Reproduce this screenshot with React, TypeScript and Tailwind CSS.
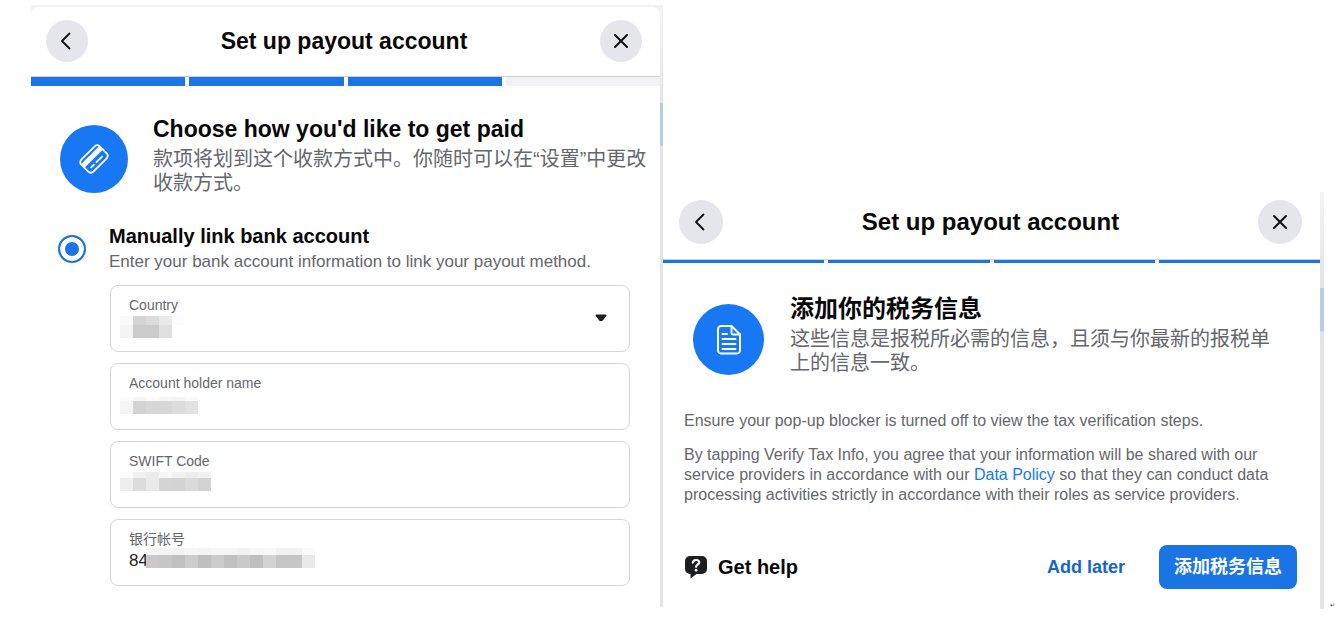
import React from "react";

const Mosaic = ({ rows, className }: any) => {
  return (
    <div className={`pointer-events-none absolute ${className}`} aria-hidden="true">
      {rows.map((row: any, i: number) => (
        <div key={i} className="flex" style={{ height: row.height }}>
          {row.cells.map((color: string, j: number) => (
            <span key={j} className="w-[13px]" style={{ backgroundColor: color }} />
          ))}
        </div>
      ))}
    </div>
  );
};

const countryMask = [
  { height: 9, cells: ["#f9f9f9", "#d4d4d4", "#dbdbdb", "#e9e9e9", "#fcfcfc"] },
  { height: 13, cells: ["#f3f3f3", "#cbcbcb", "#cbcbcb", "#e0e0e0"] },
];

const nameMask = [
  { height: 4, cells: ["#fcfcfc", "#f5f5f5", "#fbfbfb", "#f6f6f6", "#f4f4f4", "#fafafa"] },
  { height: 13, cells: ["#f5f5f5", "#d3d3d3", "#d7d7d7", "#d7d7d7", "#dcdcdc", "#e2e2e2"] },
];

const swiftMask = [
  { height: 6, cells: ["#fbfbfb", "#f0f0f0", "#ebebeb", "#f6f6f6", "#f1f1f1", "#ededed", "#f1f1f1"] },
  { height: 13, cells: ["#eeeeee", "#dcdcdc", "#eaeaea", "#d4d4d4", "#d3d3d3", "#dadada", "#d2d2d2"] },
];

const accountMask = [
  {
    height: 7,
    cells: ["#f4f6f6", "#f4f6f6", "#f3f3f3", "#f6f6f6", "#f3f3f3", "#f6f6f6", "#f5f5f5", "#f2f2f2", "#f6f6f6", "#f8f8f8", "#f2f2f2", "#f1f1f1", "#fafafa"],
  },
  {
    height: 13,
    cells: ["#c9c9c9", "#c6c6c6", "#c0c0c0", "#cccccc", "#bfbfbf", "#cbcbcb", "#c0c0c0", "#c9c9c9", "#bfbfbf", "#d3d3d3", "#c6c6c6", "#c6c6c6", "#e9e9e9"],
  },
];

const Field = ({ id, label, children }: any) => {
  return (
    <div className="relative h-[67px] rounded-lg border border-[#d5d6d9] px-[18px] pt-[9px]">
      <label htmlFor={id} className="block text-sm leading-5 text-[#65676b]">
        {label}
      </label>
      {children}
    </div>
  );
};

const inputStyle = "block h-6 w-full bg-transparent text-[17px] leading-6 text-[#1c1e21] outline-none";

const BackIcon = () => (
  <svg className="h-6 w-6" viewBox="0 0 24 24" fill="none" stroke="#111" strokeWidth="1.8" strokeLinecap="round" strokeLinejoin="round">
    <path d="M14.500 4.500 7 12l7.500 7.500" />
  </svg>
);

const CloseIcon = () => (
  <svg className="h-6 w-6" viewBox="0 0 24 24" fill="none" stroke="#111" strokeWidth="2" strokeLinecap="round">
    <path d="M6 6 18 18M18 6 6 18" />
  </svg>
);

const CardIcon = () => (
  <svg className="h-9 w-9" viewBox="0 0 36 36" fill="none" stroke="#fff">
    <g transform="rotate(-45 18 18)">
      <rect x="5" y="9.500" width="26" height="17" rx="3.500" strokeWidth="1.800" />
      <path d="M5 15H31" strokeWidth="5" />
      <path d="M10 22h4M17.500 22h8" strokeWidth="1.800" strokeLinecap="round" />
    </g>
  </svg>
);

const DocumentIcon = () => (
  <svg className="h-8 w-8" viewBox="0 0 32 32" fill="none" stroke="#fff" strokeWidth="1.9" strokeLinecap="round" strokeLinejoin="round">
    <path d="M8 2h10.500L27 10.500V26.500a3 3 0 0 1-3 3H8a3 3 0 0 1-3-3V5a3 3 0 0 1 3-3Z" />
    <path d="M18.500 2v6.500a2 2 0 0 0 2 2H27M9.500 10h4.500M9.500 15h13M9.500 20h13M9.500 25h13" />
  </svg>
);

const HelpIcon = () => (
  <svg className="h-6 w-6" viewBox="0 0 24 24" fill="none">
    <path
      d="M6 1h12a5 5 0 0 1 5 5v8a5 5 0 0 1-5 5h-5.500L6.500 23.500V19H6a5 5 0 0 1-5-5V6a5 5 0 0 1 5-5Z"
      fill="#1c1e21"
    />
    <path d="M8.800 7.600c.2-1.700 1.500-2.600 3.200-2.600s3.200 1 3.200 2.500c0 2.200-3.100 2.100-3.100 4.300" stroke="#fff" strokeWidth="2.200" strokeLinecap="round" />
    <circle cx="12.100" cy="15.200" r="1.400" fill="#fff" />
  </svg>
);

// strip of the page behind the dialog that shows beside its right edge
const Edge = ({ className }: any) => {
  return (
    <div className={`flex shrink-0 flex-col bg-[#e4e4e6] ${className}`}>
      <div className="h-24 bg-linear-to-b from-[#f4f4f4] to-[#e4e4e6]" />
      <div className="h-[43px] bg-[#b9cdeb]" />
    </div>
  );
};

const roundButton = "flex shrink-0 items-center justify-center rounded-full bg-[#e4e6eb]";

const Steps = ({ done, className }: any) => {
  return (
    <div className={`flex gap-1 ${className}`}>
      {[1, 2, 3, 4].map((n) => (
        <div key={n} className={n <= done ? "flex-1 bg-[#1b74e4]" : "flex-1 bg-[#f0f2f5]"} />
      ))}
    </div>
  );
};

const PayoutMethod = () => {
  return (
    <section className="mb-0.5 flex bg-[#f2f2f2] pt-0.5">
      <div className="min-w-0 flex-1 rounded-t-lg bg-white pb-[21px]">
        <header className="flex h-[70px] items-center justify-between border-b border-[#ced0d4] pr-[18px] pb-0.5 pl-[15px]">
          <button type="button" aria-label="Back" className={`${roundButton} h-[42px] w-[42px]`}>
            <BackIcon />
          </button>
          <h1 className="text-[23px] leading-7 font-bold text-[#080809]">Set up payout account</h1>
          <button type="button" aria-label="Close" className={`${roundButton} h-[42px] w-[42px]`}>
            <CloseIcon />
          </button>
        </header>
        <Steps done={3} className="h-[9px]" />

        <div className="flex items-start gap-[25px] pt-[27px] pr-3 pl-[29px]">
          <div className="mt-3 flex h-[68px] w-[68px] shrink-0 items-center justify-center rounded-full bg-[#1877f2]">
            <CardIcon />
          </div>
          <div>
            <h2 className="text-[23px] leading-8 font-bold text-[#080809]">Choose how you'd like to get paid</h2>
            <p className="mt-0.5 text-xl leading-6 text-[#65676b]" lang="zh-CN">
              款项将划到这个收款方式中。你随时可以在“设置”中更改收款方式。
            </p>
          </div>
        </div>

        <div className="flex items-center gap-[23px] pt-[29px] pl-[27px]">
          <input
            id="manual"
            type="radio"
            name="method"
            defaultChecked
            className="h-7 w-7 shrink-0 appearance-none rounded-full border-2 border-[#1b74e4] bg-white checked:bg-[#1b74e4] checked:shadow-[inset_0_0_0_5px_white]"
          />
          <label htmlFor="manual" className="block">
            <span className="block text-xl leading-6 font-bold text-[#080809]">Manually link bank account</span>
            <span className="mt-0.5 block text-[17px] leading-6 text-[#65676b]">
              Enter your bank account information to link your payout method.
            </span>
          </label>
        </div>

        <div className="flex flex-col gap-[11px] pt-[11px] pr-[30px] pl-[79px]">
          <Field id="country" label="Country">
            <select id="country" className={`${inputStyle} appearance-none`}>
              <option value=""></option>
            </select>
            <svg className="pointer-events-none absolute top-7 right-[22px] h-2 w-3" viewBox="0 0 12 8">
              <path d="M1.500 1.500h9L7 6H5Z" fill="#1c1e21" stroke="#1c1e21" strokeWidth="2" strokeLinejoin="round" />
            </svg>
            <Mosaic rows={countryMask} className="top-[30px] left-[9px]" />
          </Field>
          <Field id="holder" label="Account holder name">
            <input id="holder" type="text" className={inputStyle} />
            <Mosaic rows={nameMask} className="top-[33px] left-[9px]" />
          </Field>
          <Field id="swift" label="SWIFT Code">
            <input id="swift" type="text" className={inputStyle} />
            <Mosaic rows={swiftMask} className="top-[30px] left-[9px]" />
          </Field>
          <Field id="account" label="银行帐号">
            <input id="account" type="text" defaultValue="84" className={inputStyle} />
            <Mosaic rows={accountMask} className="top-7 left-[35px]" />
          </Field>
        </div>
      </div>
      <Edge className="w-[3px]" />
    </section>
  );
};

const TaxInfo = () => {
  return (
    <section className="flex bg-white">
      <div className="min-w-0 flex-1 pb-5">
        <header className="flex h-[68px] items-center justify-between border-b border-[#ced0d4] pt-2 pr-[18px] pb-4 pl-4">
          <button type="button" aria-label="Back" className={`${roundButton} h-11 w-11`}>
            <BackIcon />
          </button>
          <h1 className="text-2xl leading-7 font-bold text-[#080809]">Set up payout account</h1>
          <button type="button" aria-label="Close" className={`${roundButton} h-11 w-11`}>
            <CloseIcon />
          </button>
        </header>
        <Steps done={4} className="h-[3px]" />

        <div className="flex items-start gap-[26px] pt-[30px] pr-8 pl-[30px]">
          <div className="mt-[11px] flex h-[71px] w-[71px] shrink-0 items-center justify-center rounded-full bg-[#1877f2]">
            <DocumentIcon />
          </div>
          <div lang="zh-CN">
            <h2 className="text-2xl leading-8 font-bold text-[#080809]">添加你的税务信息</h2>
            <p className="mt-0.5 text-xl leading-6 text-[#65676b]">
              这些信息是报税所必需的信息，且须与你最新的报税单上的信息一致。
            </p>
          </div>
        </div>

        <div className="flex flex-col gap-[14px] px-[21px] pt-9 text-base leading-5 text-[#65676b]">
          <p>Ensure your pop-up blocker is turned off to view the tax verification steps.</p>
          <p>
            By tapping Verify Tax Info, you agree that your information will be shared with our service providers in
            accordance with our{" "}
            <a href="#policy" className="text-[#1877f2]">
              Data Policy
            </a>{" "}
            so that they can conduct data processing activities strictly in accordance with their roles as service
            providers.
          </p>
        </div>

        <div className="flex items-center justify-between pt-10 pr-[23px] pl-[21px]">
          <button type="button" className="flex items-center gap-[10px] text-xl leading-7 font-bold text-[#080809]">
            <HelpIcon />
            Get help
          </button>
          <div className="flex items-center gap-[34px]">
            <button type="button" className="text-lg leading-6 font-bold text-[#1763cf]">
              Add later
            </button>
            <button
              type="button"
              lang="zh-CN"
              className="h-11 rounded-lg bg-[#1b74e4] px-[15px] text-lg leading-6 font-bold text-white"
            >
              添加税务信息
            </button>
          </div>
        </div>
      </div>
      <Edge className="w-1" />
    </section>
  );
};

export default function App() {
  return (
    <main className="flex items-end bg-white pt-[5px] pl-[31px] font-['Liberation_Sans','Noto_Sans_CJK_SC',sans-serif]">
      <div className="grid min-w-0 flex-1 grid-cols-[632fr_661fr] items-end">
        <PayoutMethod />
        <TaxInfo />
      </div>
      <span className="w-3 shrink-0 pl-1.5 text-[6px] leading-2 text-gray-700">↵</span>
    </main>
  );
}
